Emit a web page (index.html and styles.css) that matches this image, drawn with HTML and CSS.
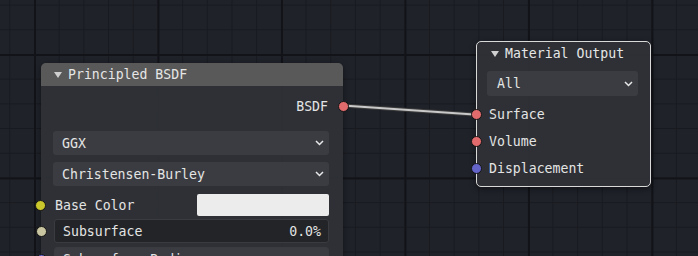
FILE: index.html
```html
<!DOCTYPE html>
<html lang="en">
<head>
  <meta charset="UTF-8">
  <meta name="viewport" content="width=device-width, initial-scale=1.0">
  <title>Shader Editor</title>
  <link rel="stylesheet" href="styles.css">
</head>
<body>
  <div class="editor">
    <svg class="links" width="698" height="256" viewBox="0 0 698 256">
      <line x1="343" y1="105.5" x2="474" y2="114.5" class="link-edge"/>
      <line x1="343" y1="105.5" x2="474" y2="114.5" class="link-core"/>
    </svg>

    <div class="node bsdf">
      <div class="node-head">
        <svg class="tri" width="8" height="6" viewBox="0 0 8 6"><polygon points="0,0 8,0 4,6"/></svg>
        <span>Principled BSDF</span>
      </div>
      <div class="node-body">
        <div class="row out">
          <span>BSDF</span>
          <i class="sock right shader"></i>
        </div>
        <div class="select first">
          <span>GGX</span>
          <svg class="chev" width="9" height="6" viewBox="0 0 9 6"><polyline points="1,1 4.5,4.5 8,1"/></svg>
        </div>
        <div class="select">
          <span>Christensen-Burley</span>
          <svg class="chev" width="9" height="6" viewBox="0 0 9 6"><polyline points="1,1 4.5,4.5 8,1"/></svg>
        </div>
        <div class="row in color-row">
          <i class="sock left color"></i>
          <span>Base Color</span>
          <div class="swatch"></div>
        </div>
        <div class="field">
          <i class="sock left float"></i>
          <span>Subsurface</span>
          <span>0.0%</span>
        </div>
        <div class="field">
          <i class="sock left vector"></i>
          <span>Subsurface Radius</span>
        </div>
      </div>
    </div>

    <div class="node output selected">
      <div class="node-head">
        <svg class="tri" width="8" height="6" viewBox="0 0 8 6"><polygon points="0,0 8,0 4,6"/></svg>
        <span>Material Output</span>
      </div>
      <div class="node-body">
        <div class="select">
          <span>All</span>
          <svg class="chev" width="9" height="6" viewBox="0 0 9 6"><polyline points="1,1 4.5,4.5 8,1"/></svg>
        </div>
        <div class="row in first-in">
          <i class="sock left shader"></i>
          <span>Surface</span>
        </div>
        <div class="row in">
          <i class="sock left shader"></i>
          <span>Volume</span>
        </div>
        <div class="row in">
          <i class="sock left vector"></i>
          <span>Displacement</span>
        </div>
      </div>
    </div>
  </div>
</body>
</html>
```

FILE: styles.css
```css
body {
  margin: 0;
  background: #1f2229;
  font-family: "DejaVu Sans Mono", "Liberation Mono", monospace;
  font-size: 13.2px;
  color: #e4e4e4;
  overflow: hidden;
}
.editor {
  position: relative;
  width: 698px;
  height: 256px;
  overflow: hidden;
  background-color: #1f2229;
  background-image:
    linear-gradient(to right, #111318 1.5px, transparent 1.5px),
    linear-gradient(to bottom, #111318 1.5px, transparent 1.5px),
    linear-gradient(to right, #181a20 1px, transparent 1px),
    linear-gradient(to bottom, #181a20 1px, transparent 1px);
  background-size: 123.5px 123.5px, 123.5px 123.5px, 24.7px 24.7px, 24.7px 24.7px;
  background-position: 34px 54px, 34px 54px, 9.3px 4.6px, 9.3px 4.6px;
}
.links {
  position: absolute;
  left: 0;
  top: 0;
  z-index: 2;
  pointer-events: none;
}
.link-edge {
  stroke: #3c3c3c;
  stroke-width: 4;
}
.link-core {
  stroke: #c9c9c9;
  stroke-width: 2;
}
.node {
  position: absolute;
  box-sizing: border-box;
  background: rgba(47, 49, 54, 0.96);
  border-radius: 5px;
  box-shadow: 0 2px 6px rgba(0, 0, 0, 0.45);
}
.node.bsdf {
  left: 41px;
  top: 63px;
  width: 302px;
  height: 230px;
}
.node.output {
  left: 476px;
  top: 41px;
  width: 175px;
  height: 146px;
}
.node.selected {
  border: 1px solid #d9d9d9;
}
.node-head {
  display: flex;
  align-items: center;
  height: 23px;
  padding-left: 13px;
  gap: 6px;
  color: #e6e6e6;
}
.bsdf .node-head {
  background: #595959;
  border-radius: 5px 5px 0 0;
}
.output .node-head {
  padding-left: 14px;
}
.tri {
  fill: #cfcfcf;
}
.node-body {
  display: flex;
  flex-direction: column;
}
.bsdf .node-body {
  padding-top: 9px;
}
.row {
  position: relative;
  display: flex;
  align-items: center;
  height: 22px;
}
.row.out {
  justify-content: flex-end;
  padding-right: 15px;
}
.row.in {
  padding-left: 12px;
}
.bsdf .row.in {
  padding-left: 14px;
  padding-right: 14px;
}
.color-row {
  justify-content: space-between;
  margin-top: 8px;
}
.swatch {
  width: 132px;
  height: 22px;
  background: #ececec;
  border-radius: 2px;
}
.output .row.in {
  margin-top: 5px;
}
.output .row.first-in {
  margin-top: 7px;
}
.select {
  display: flex;
  align-items: center;
  justify-content: space-between;
  height: 24px;
  margin: 7px 14px 0 12px;
  padding: 0 5px 0 9px;
  background: #3a3c42;
  border-radius: 3px;
}
.select.first {
  margin-top: 14px;
}
.output .select {
  height: 25px;
  margin: 6px 12px 0 10px;
  padding-left: 10px;
}
.chev {
  fill: none;
  stroke: #e8e8e8;
  stroke-width: 1.5;
}
.field {
  position: relative;
  display: flex;
  align-items: center;
  justify-content: space-between;
  height: 24px;
  margin: 3px 14px 0 13px;
  padding: 0 7px 0 8px;
  background: #222428;
  border: 1px solid #393b40;
  box-sizing: border-box;
  border-radius: 3px;
}
.field + .field {
  margin-top: 4px;
  background: #3a3c42;
}
.sock {
  position: absolute;
  top: 50%;
  width: 9px;
  height: 9px;
  margin-top: -5.5px;
  border-radius: 50%;
  border: 1px solid #151515;
  z-index: 3;
}
.sock.right {
  right: -6px;
}
.sock.left {
  left: -6px;
}
.field .sock.left {
  left: -19px;
}
.sock.shader {
  background: #e06a6c;
}
.sock.color {
  background: #c9c72b;
}
.sock.float {
  background: #c8c5a0;
}
.sock.vector {
  background: #6363c8;
}
```
